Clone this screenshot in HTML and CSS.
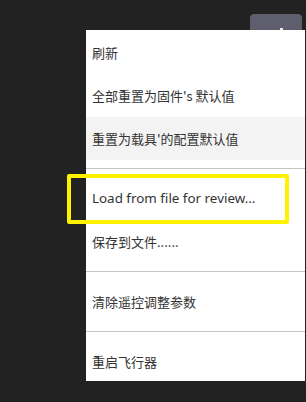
FILE: index.html
```html
<!DOCTYPE html>
<html>
<head>
<meta charset="utf-8">
<link rel="stylesheet" href="styles.css">
</head>
<body>
<div class="topbar">
  <div class="tool-btn"><span class="btn-mark"></span></div>
</div>
<div class="menu">
  <div class="item">刷新</div>
  <div class="item">全部重置为固件's 默认值</div>
  <div class="item hover">重置为载具'的配置默认值</div>
  <div class="sep"></div>
  <div class="item latin">Load from file for review...</div>
  <div class="item">保存到文件......</div>
  <div class="sep"></div>
  <div class="item">清除遥控调整参数</div>
  <div class="sep"></div>
  <div class="item">重启飞行器</div>
</div>
<div class="callout"></div>
</body>
</html>
```

FILE: styles.css
```css
html, body {
  margin: 0;
  padding: 0;
  background: #222222;
  width: 306px;
  height: 402px;
  overflow: hidden;
  font-family: "Noto Sans", "Noto Sans CJK SC", sans-serif;
}
.topbar {
  display: flex;
  justify-content: flex-end;
  padding: 14px 4px 0 0;
}
.tool-btn {
  width: 52px;
  height: 24px;
  background: #5f5e6e;
  border-radius: 4px;
  position: relative;
}
.btn-mark {
  position: absolute;
  left: 30px;
  top: 14px;
  width: 3px;
  height: 3px;
  background: #e8e8e8;
}
.menu {
  position: absolute;
  left: 86px;
  top: 30px;
  width: 219px;
  height: 351px;
  background: #ffffff;
  padding-top: 1px;
  box-sizing: border-box;
  overflow: hidden;
}
.item {
  height: 43px;
  line-height: 43px;
  padding-left: 6px;
  font-size: 13px;
  color: #333333;
  font-family: "Noto Sans CJK SC", sans-serif;
  white-space: nowrap;
}
.item.latin {
  font-family: "Noto Sans", "Noto Sans CJK SC", sans-serif;
  font-size: 13.4px;
}
.item.hover {
  background: #f3f3f3;
}
.sep {
  height: 1px;
  background: #c4c4c4;
  margin: 8px 0;
}
.callout {
  position: absolute;
  left: 67px;
  top: 174px;
  width: 222px;
  height: 50px;
  box-sizing: border-box;
  border: 4px solid #fff200;
  border-radius: 2px;
}
```
